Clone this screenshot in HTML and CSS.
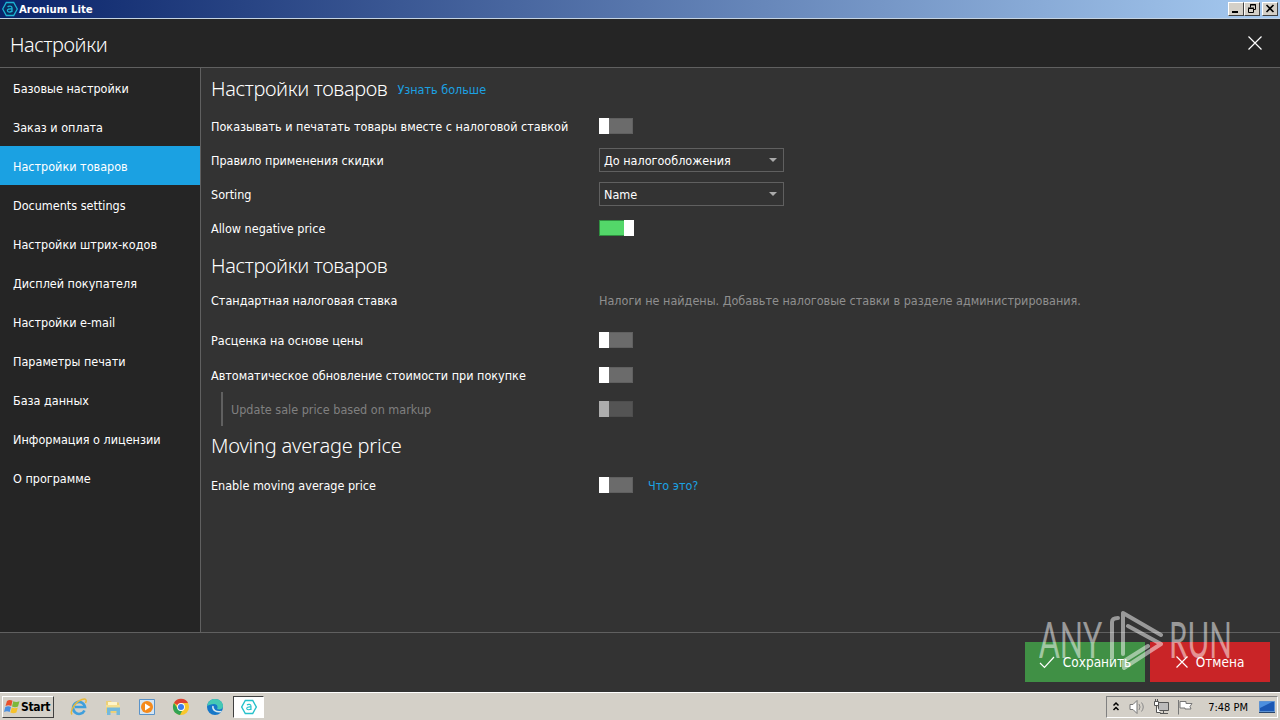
FILE: index.html
```
<!DOCTYPE html>
<html lang="ru">
<head>
  <meta charset="UTF-8">
  <title>Aronium Lite</title>
  <link rel="stylesheet" href="styles.css">
</head>
<body>

  <div class="titlebar">
    <svg class="app-icon" width="16" height="16" viewBox="0 0 16 16">
      <path d="M4.3 1.5h7.4L15.3 8l-3.6 6.5H4.3L.7 8z" fill="#0a2c60" stroke="#1cb4d4" stroke-width="1.3"/>
      <path d="M5.6 6c1-1.2 4.4-1.2 4.4 1v4M10 8C7 7.6 5.4 8.3 5.4 9.6c0 2 3.6 2 4.6 0" fill="none" stroke="#1cb4d4" stroke-width="1.3"/>
    </svg>
    <span class="app-name">Aronium Lite</span>
    <div class="window-buttons">
      <button class="win-btn"><svg width="14" height="12"><path d="M3 9h6" stroke="#000" stroke-width="2"/></svg></button>
      <button class="win-btn"><svg width="14" height="12"><path d="M5.5 4.5V1.500h5v5H8.500M5 2h6M3.500 5.500h5v4h-5zM3 5h6" fill="none" stroke="#000"/></svg></button>
      <button class="win-btn close"><svg width="14" height="12"><path d="M3.500 2l7 7M10.500 2l-7 7" stroke="#000" stroke-width="1.600"/></svg></button>
    </div>
  </div>

  <div class="header">
    <h1>Настройки</h1>
    <svg class="header-close" width="14" height="14"><path d="M.5.5l13 13M13.500.5l-13 13" stroke="#fff" stroke-width="1.200"/></svg>
  </div>

  <div class="main">
    <ul class="sidebar">
      <li>Базовые настройки</li>
      <li>Заказ и оплата</li>
      <li class="active">Настройки товаров</li>
      <li>Documents settings</li>
      <li>Настройки штрих-кодов</li>
      <li>Дисплей покупателя</li>
      <li>Настройки e-mail</li>
      <li>Параметры печати</li>
      <li>База данных</li>
      <li>Информация о лицензии</li>
      <li>О программе</li>
    </ul>

    <div class="content">
      <div class="heading first"><h2>Настройки товаров</h2><a class="link">Узнать больше</a></div>
      <div class="row"><label>Показывать и печатать товары вместе с налоговой ставкой</label><span class="toggle"></span></div>
      <div class="row"><label>Правило применения скидки</label><div class="select">До налогообложения</div></div>
      <div class="row"><label>Sorting</label><div class="select">Name</div></div>
      <div class="row"><label>Allow negative price</label><span class="toggle on"></span></div>

      <div class="heading second"><h2>Настройки товаров</h2></div>
      <div class="row tax"><label>Стандартная налоговая ставка</label><span class="hint">Налоги не найдены. Добавьте налоговые ставки в разделе администрирования.</span></div>
      <div class="row markup"><label>Расценка на основе цены</label><span class="toggle"></span></div>
      <div class="row"><label>Автоматическое обновление стоимости при покупке</label><span class="toggle"></span></div>
      <div class="row disabled"><label>Update sale price based on markup</label><span class="toggle"></span></div>

      <div class="heading third"><h2 class="latin">Moving average price</h2></div>
      <div class="row average"><label>Enable moving average price</label><span class="toggle"></span><a class="link">Что это?</a></div>
    </div>
  </div>

  <div class="footer">
    <button class="btn save"><svg width="16" height="14"><path d="M1 8l4.500 4.500L15 2" fill="none" stroke="#fff" stroke-width="1.200"/></svg>Сохранить</button>
    <button class="btn cancel"><svg width="12" height="12"><path d="M.5.5l11 11M11.500.5l-11 11" stroke="#fff" stroke-width="1.200"/></svg>Отмена</button>
  </div>

  <svg class="watermark" width="200" height="70" viewBox="0 0 200 70">
    <text x="3" y="53" textLength="63" lengthAdjust="spacingAndGlyphs">ANY</text>
    <text x="133" y="53" textLength="63" lengthAdjust="spacingAndGlyphs">RUN</text>
    <path d="M76 53V17q0-4 6-4M125 30L87 8v41M92 21l33 18-37 24v-7l24-15"/>
  </svg>

  <div class="taskbar">
    <button class="start">
      <svg width="17" height="16" viewBox="0 0 17 16">
        <path d="M3 2c2-1.500 4-1 5.500-.2L7.300 7C5.500 6 3.500 6 1.500 7z" fill="#e8502c"/>
        <path d="M9.300 2.200c2 1 4 1 6.200 0L14 7.500c-2 .9-4 .8-6 0z" fill="#7db83a"/>
        <path d="M1.300 8c2-1 4-1 5.700 0l-1.300 5C4 12 2 12 0 13z" fill="#4a8fe0"/>
        <path d="M7.800 8.500c2 .9 4 .9 6 0l-1.400 5c-2 1-4 .9-6 0z" fill="#f6c22c"/>
      </svg>Start
    </button>
    <div class="quick">
      <svg width="18" height="18" viewBox="0 0 18 18">
        <path d="M14.500 12.500A6 6 0 1 1 15 9H5" fill="none" stroke="#3f9fdc" stroke-width="2.600"/>
        <path d="M2 16.500C-.5 13 5 4 12 1.500c4-1.300 5 .5 3.500 3.500" fill="none" stroke="#e9b93a" stroke-width="1.500"/>
      </svg>
      <svg width="18" height="18" viewBox="0 0 18 18">
        <path d="M2 3h5l1 1.500h7V15H2z" fill="#ecd079"/>
        <path d="M4 4h9v5H4z" fill="#fff5c8"/>
        <path d="M3 9h13v8h-3.500v-4h-6v4H3z" fill="#74b9dc"/>
        <path d="M2 7h14v2.500H2z" fill="#f4df91"/>
      </svg>
      <svg width="18" height="18" viewBox="0 0 18 18">
        <path d="M1.500 1.500h15v15h-15z" fill="#d4e5f4" stroke="#5a93c9"/>
        <circle cx="9" cy="9" r="6" fill="#f58a1c"/>
        <path d="M7 5.500L12.500 9 7 12.500z" fill="#fff"/>
      </svg>
      <svg width="18" height="18" viewBox="0 0 18 18">
        <circle cx="9" cy="9" r="8" fill="#f9c72c"/>
        <path d="M9 9L2 5a8 8 0 0 1 14 0H9z" fill="#dd4334"/>
        <path d="M2 5l4 6 4 2-2 4A8 8 0 0 1 2 5z" fill="#31a353"/>
        <circle cx="9" cy="9" r="3.900" fill="#fff"/><circle cx="9" cy="9" r="3" fill="#3b7ded"/>
      </svg>
      <svg width="18" height="18" viewBox="0 0 18 18">
        <circle cx="9" cy="9" r="8" fill="#1677c8"/>
        <path d="M1.300 8C2 3 5 1 9 1c5 0 8 3.500 8 7 0 3-3 4-6 3 1-1 1-5-3-5-3 0-5 1-6.700 2z" fill="#45c8b4"/>
        <path d="M7 8c-1 4 3 6.500 8.500 5.500" fill="none" stroke="#d7e8ee" stroke-width="1.500"/>
      </svg>
    </div>
    <div class="task-active">
      <svg width="16" height="16" viewBox="0 0 16 16">
        <path d="M4.300 1.500h7.400L15.300 8l-3.600 6.500H4.300L.7 8z" fill="none" stroke="#26c1cb" stroke-width="1.400"/>
        <path d="M6 6c1-1 4-1 4 1v4M10 8c-3-.3-4.300.3-4.300 1.500 0 1.700 3.300 1.700 4.300 0" fill="none" stroke="#26c1cb" stroke-width="1.100"/>
      </svg>
    </div>
    <div class="tray">
      <svg class="chevrons" width="8" height="12"><path d="M1.500 4.500L4 2l2.500 2.500M1.500 9L4 6.500 6.500 9" fill="none" stroke="#000" stroke-width="1.500"/></svg>
      <svg class="sound" width="17" height="16"><path d="M1 5.500h3l4-4v13l-4-4H1z" fill="#fff" stroke="#777"/><path d="M10 5q2 3 0 6M12.500 3.500q3.500 4.500 0 9" fill="none" stroke="#888"/></svg>
      <svg class="network" width="17" height="16"><path d="M5.500 3.500h10v8h-10z" fill="#bbb" stroke="#555"/><path d="M7 14.500h8M10.500 12v2" stroke="#555"/><path d="M1.500 2.500h4v4h-4zM2.500 0v2M4.500 0v2M3.500 7v6.500h4" fill="#fff" stroke="#555"/></svg>
      <svg class="flag" width="17" height="16"><path d="M1.500 1v14.500M3 2.500h6v2h6l-2 3 1 2.500H8V9H3z" fill="#fff" stroke="#777"/></svg>
      <span class="clock">7:48 PM</span>
      <svg class="desktop" width="16" height="14"><path d="M.5 1.500h15v10H.5z" fill="#1c58b4" stroke="#5d92d2"/><path d="M1 2h12L1 8z" fill="#4c8fdf"/><path d="M0 12.500h16" stroke="#28466e"/></svg>
    </div>
  </div>

</body>
</html>
```
FILE: styles.css
```
* {
  box-sizing: border-box;
}

body {
  margin: 0;
  width: 1280px;
  height: 720px;
  display: flex;
  flex-direction: column;
  overflow: hidden;
  background-color: #333333;
  color: #fff;
  font-family: "DejaVu Sans Condensed", sans-serif;
  font-size: 12.5px;
}

svg {
  display: block;
  flex: none;
}

/* window title */
.titlebar {
  height: 19px;
  flex: none;
  display: flex;
  align-items: center;
  padding: 0 2px;
  background: linear-gradient(90deg, #0a246a, #a6caf0);
  border-bottom: 1px solid #c4d3e2;
}

.app-name {
  margin-left: 1px;
  font: bold 11.3px "DejaVu Sans Condensed", sans-serif;
}

.window-buttons {
  margin-left: auto;
  display: flex;
}

.win-btn {
  width: 16px;
  height: 14px;
  padding: 0;
  background-color: #d4d0c8;
  border: 1px solid;
  border-color: #fff #404040 #404040 #fff;
}

.win-btn.close {
  margin-left: 2px;
}

/* page header */
.header {
  height: 49px;
  flex: none;
  display: flex;
  align-items: center;
  justify-content: space-between;
  padding: 0 18px 0 10px;
  background-color: #252525;
  border-bottom: 1px solid #606060;
}

h1,
h2 {
  margin: 0;
  font-family: "Noto Sans", sans-serif;
  font-size: 20px;
  font-weight: 300;
  line-height: 28px;
  letter-spacing: -0.36px;
}

h1 {
  padding-top: 3px;
  letter-spacing: -0.44px;
}

.latin {
  letter-spacing: -0.2px;
}

/* navigation */
.main {
  height: 564px;
  flex: none;
  display: flex;
}

.sidebar {
  width: 201px;
  margin: 0;
  padding: 0;
  list-style: none;
  background-color: #252525;
  border-right: 1px solid #606060;
}

.sidebar li {
  height: 39px;
  padding: 2px 13px 0;
  line-height: 37px;
  white-space: nowrap;
}

.sidebar .active {
  background-color: #1ba1e2;
}

/* settings */
.content {
  flex: 1;
  padding-left: 10px;
}

.heading {
  display: flex;
  align-items: center;
  height: 41px;
}

.link {
  color: #1ba1e2;
  margin-left: 10px;
}

.first .link {
  padding-top: 2px;
}

.row {
  height: 34px;
  display: flex;
  align-items: center;
  white-space: nowrap;
}

.row label {
  width: 388px;
}

.toggle {
  width: 34px;
  height: 16px;
  display: flex;
  padding: 1px;
  border: 1px solid #606060;
  background-color: #6b6b6b;
}

.toggle::before {
  content: "";
  width: 10px;
  height: 16px;
  margin: -2px;
  background-color: #fff;
}

.toggle.on {
  width: 35px;
  justify-content: flex-end;
  border-color: #2f8f40;
  background-color: #53d769;
}

.select {
  width: 185px;
  height: 24px;
  display: flex;
  align-items: center;
  justify-content: space-between;
  padding: 0 6px 0 4px;
  border: 1px solid #606060;
}

.select::after {
  content: "";
  border: 4px solid transparent;
  border-top-color: #aaa;
  border-bottom: 0;
}

.second {
  height: 42px;
}

.hint {
  color: #8f8f8f;
}

.tax {
  height: 27px;
}

.markup {
  height: 44px;
  padding-top: 8px;
}

.disabled {
  margin-left: 10px;
  padding-left: 8px;
  border-left: 2px solid #606060;
  color: #808080;
}

.disabled label {
  width: 368px;
}

.disabled .toggle {
  opacity: 0.6;
}

.third {
  height: 40px;
}

.average {
  height: 38px;
}

.average .link {
  margin-left: 15px;
}

/* actions */
.footer {
  height: 60px;
  flex: none;
  display: flex;
  justify-content: flex-end;
  align-items: flex-start;
  gap: 5px;
  padding: 9px 10px 0;
  border-top: 1px solid #606060;
}

.btn {
  width: 120px;
  height: 40px;
  display: flex;
  align-items: center;
  justify-content: center;
  gap: 8px;
  padding: 0;
  border: 0;
  color: #fff;
  font: 13.5px "DejaVu Sans Condensed", sans-serif;
}

.save {
  background-color: #409045;
}

.cancel {
  background-color: #c92427;
}

.watermark {
  position: absolute;
  left: 1036px;
  top: 605px;
  overflow: visible;
  opacity: 0.5;
  font: 400 50px Lato, sans-serif;
  fill: #fff;
}

.watermark path {
  fill: none;
  stroke: #fff;
  stroke-width: 4;
  stroke-linecap: round;
  stroke-linejoin: round;
}

/* taskbar */
.taskbar {
  height: 28px;
  flex: none;
  display: flex;
  align-items: center;
  padding: 1px 2px 0;
  background-color: #d4d0c8;
  border-top: 1px solid #fff;
  color: #000;
}

.start {
  width: 52px;
  height: 22px;
  display: flex;
  align-items: center;
  padding: 0 1px;
  border: 1px solid;
  border-color: #fff #404040 #404040 #fff;
  background-color: #d4d0c8;
  font: bold 12px "DejaVu Sans Condensed", sans-serif;
  letter-spacing: -0.3px;
}

.quick {
  display: flex;
  gap: 16px;
  margin-left: 16px;
}

.task-active {
  width: 31px;
  height: 22px;
  margin-left: 9px;
  display: flex;
  align-items: center;
  justify-content: center;
  background-color: #fff;
  border: 1px solid;
  border-color: #404040 #fff #fff #404040;
}

.tray {
  width: 172px;
  height: 22px;
  margin-left: auto;
  display: flex;
  align-items: center;
  padding: 0 2px 0 5px;
  border: 1px solid;
  border-color: #808080 #fff #fff #808080;
}

.sound {
  margin-left: 9px;
}

.network,
.flag {
  margin-left: 7px;
}

.clock {
  margin-left: auto;
  font: 11px "DejaVu Sans Condensed", sans-serif;
}

.desktop {
  margin-left: 11px;
}
```
